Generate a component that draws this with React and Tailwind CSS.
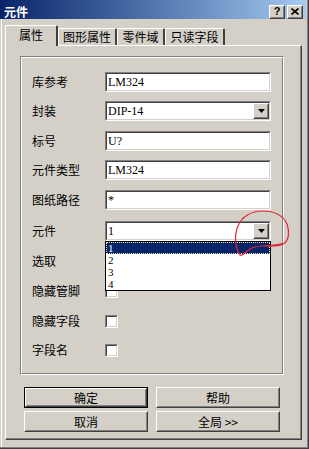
const cjk = { fontFamily: '"Noto Sans CJK SC", "Noto Sans", sans-serif' };
const serif = { fontFamily: '"Liberation Serif", "Noto Sans CJK SC", serif' };

function Raised({ className = '', children }) {
  return (
    <div className={`border border-t-white border-l-white border-r-[#404040] border-b-[#404040] bg-[#d4d0c8] ${className}`}>
      <div className="w-full h-full border border-t-[#d4d0c8] border-l-[#d4d0c8] border-r-[#808080] border-b-[#808080] flex items-center justify-center">
        {children}
      </div>
    </div>
  );
}

function Sunken({ className = '', children }) {
  return (
    <div className={`border border-t-[#808080] border-l-[#808080] border-r-white border-b-white ${className}`}>
      <div className="w-full h-full border border-t-[#404040] border-l-[#404040] border-r-[#d4d0c8] border-b-[#d4d0c8] bg-white flex items-center">
        {children}
      </div>
    </div>
  );
}

function Arrow() {
  return (
    <svg width="7" height="4" viewBox="0 0 7 4">
      <path d="M0 0h7L3.5 4z" fill="#000" />
    </svg>
  );
}

function TextBox({ value }) {
  return (
    <Sunken className="w-[166px] h-[20px]">
      <span className="pl-[1px] text-[12px] text-black leading-none" style={serif}>{value}</span>
    </Sunken>
  );
}

function Combo({ value, open }) {
  return (
    <div className="relative">
      <Sunken className="w-[166px] h-[20px]">
        <span className="flex-1 pl-[1px] text-[12px] text-black leading-none" style={serif}>{value}</span>
        <Raised className="w-[16px] h-[16px]">
          <Arrow />
        </Raised>
      </Sunken>
      {open && (
        <div className="absolute left-0 top-full w-[166px] h-[50px] border border-black bg-white z-20 flex flex-col">
          {['1', '2', '3', '4'].map((n, i) => (
            <div
              key={n}
              className={`h-[12px] overflow-hidden text-[11px] ${
                i === 0
                  ? 'bg-[#0a246a] text-white border border-dotted border-[#e8e8b0] leading-[10px] pl-px'
                  : 'text-black leading-[12px] pl-[2px]'
              }`}
              style={serif}
            >
              {n}
            </div>
          ))}
        </div>
      )}
    </div>
  );
}

function CheckBox() {
  return <Sunken className="w-[13px] h-[13px]" />;
}

const rows = [
  { label: '库参考', kind: 'text', value: 'LM324', mt: 'mt-0' },
  { label: '封装', kind: 'combo', value: 'DIP-14', mt: 'mt-[9px]' },
  { label: '标号', kind: 'text', value: 'U?', mt: 'mt-[10px]' },
  { label: '元件类型', kind: 'text', value: 'LM324', mt: 'mt-[9px]' },
  { label: '图纸路径', kind: 'text', value: '*', mt: 'mt-[10px]' },
  { label: '元件', kind: 'combo', value: '1', mt: 'mt-[11px]', open: true },
  { label: '选取', kind: 'check', mt: 'mt-[10px]' },
  { label: '隐藏管脚', kind: 'check', mt: 'mt-[10px]' },
  { label: '隐藏字段', kind: 'check', mt: 'mt-[10px]' },
  { label: '字段名', kind: 'check', mt: 'mt-[9px]' },
];

const tabs = [
  { label: '属性', w: 'w-[53px]', active: true },
  { label: '图形属性', w: 'w-[59px]' },
  { label: '零件域', w: 'w-[48px]' },
  { label: '只读字段', w: 'w-[60px]' },
];

function Btn({ label, isDefault }) {
  if (isDefault) {
    return (
      <div className="h-[21px] border border-black">
        <Raised className="w-full h-full">
          <span className="text-[12px] text-black leading-none" style={cjk}>{label}</span>
        </Raised>
      </div>
    );
  }
  return (
    <Raised className="h-[21px]">
      <span className="text-[12px] text-black leading-none" style={cjk}>{label}</span>
    </Raised>
  );
}

export default function App() {
  return (
    <div className="relative w-[309px] h-[449px] overflow-hidden bg-[#d4d0c8] border-r border-b border-r-[#404040] border-b-[#404040]" style={cjk}>
      <div className="w-full h-full border-r border-b border-r-[#808080] border-b-[#808080] flex flex-col">
        {/* Title bar */}
        <div className="h-[19px] w-[306px] bg-linear-to-r from-[#0a246a] to-[#a6caf0] flex items-center pt-[4px] pl-[4px] pr-[3px]">
          <span className="flex-1 text-[12px] font-bold text-white leading-none">元件</span>
          <div className="flex gap-[2px]">
            <Raised className="w-[16px] h-[14px]">
              <span className="text-[11px] font-bold text-black leading-none" style={{ fontFamily: '"Liberation Sans", sans-serif' }}>?</span>
            </Raised>
            <Raised className="w-[16px] h-[14px]">
              <svg width="8" height="7" viewBox="0 0 8 7">
                <path d="M0.5 0.5l7 6M7.5 0.5l-7 6" stroke="#000" strokeWidth="1.6" />
              </svg>
            </Raised>
          </div>
        </div>

        {/* Body */}
        <div className="flex-1 ml-px border-l border-white pl-[3px] pt-[6px]">
          {/* Tabs */}
          <div className="relative z-10 flex items-end h-[20px]">
            {tabs.map((t) => (
              <div
                key={t.label}
                className={`${t.w} flex items-center justify-center border-l border-t border-r-2 border-l-white border-t-white border-r-[#404040] rounded-tl-[2px] rounded-tr-[2px] bg-[#d4d0c8] text-[12px] text-black ${
                  t.active ? 'h-[21px] -mb-px pb-[2px]' : 'h-[17px]'
                }`}
              >
                {t.label}
              </div>
            ))}
          </div>

          {/* Tab page */}
          <div className="w-[297px] h-[395px] border-l border-t border-r border-b border-l-white border-t-white border-r-[#404040] border-b-[#404040]">
            <div className="w-full h-full border-r border-b border-r-[#808080] border-b-[#808080] flex flex-col">
              {/* Group box */}
              <div className="ml-[14px] mt-[10px] w-[264px] h-[319px] border border-t-[#808080] border-l-[#808080] border-r-white border-b-white">
                <div className="w-full h-full border border-t-white border-l-white border-r-[#808080] border-b-[#808080] pt-[14px] pl-[10px] flex flex-col">
                  {rows.map((r) => (
                    <div key={r.label} className={`flex items-center h-[20px] ${r.mt}`}>
                      <span className="w-[73px] text-[12px] text-black leading-none">{r.label}</span>
                      {r.kind === 'text' && <TextBox value={r.value} />}
                      {r.kind === 'combo' && <Combo value={r.value} open={r.open} />}
                      {r.kind === 'check' && <CheckBox />}
                    </div>
                  ))}
                </div>
              </div>

              {/* Buttons */}
              <div className="ml-[18px] mt-[12px] w-[256px] grid grid-cols-2 gap-x-[8px] gap-y-[3px]">
                <Btn label="确定" isDefault />
                <Btn label="帮助" />
                <Btn label="取消" />
                <Btn label="全局 >>" />
              </div>
            </div>
          </div>
        </div>
      </div>

      {/* Red hand-drawn annotation */}
      <svg className="absolute inset-0 pointer-events-none z-30" width="309" height="449" viewBox="0 0 309 449">
        <path
          d="M283 243 C276 247 262 244 252 248 C245 251 243 257 240 255 C235 248 234 236 238 226 C242 216 252 211 262 211 C273 211 283 215 287 224 C290 232 289 241 283 244 C278 247 270 246 265 246"
          fill="none"
          stroke="#e0283a"
          strokeWidth="1.2"
        />
      </svg>
    </div>
  );
}
